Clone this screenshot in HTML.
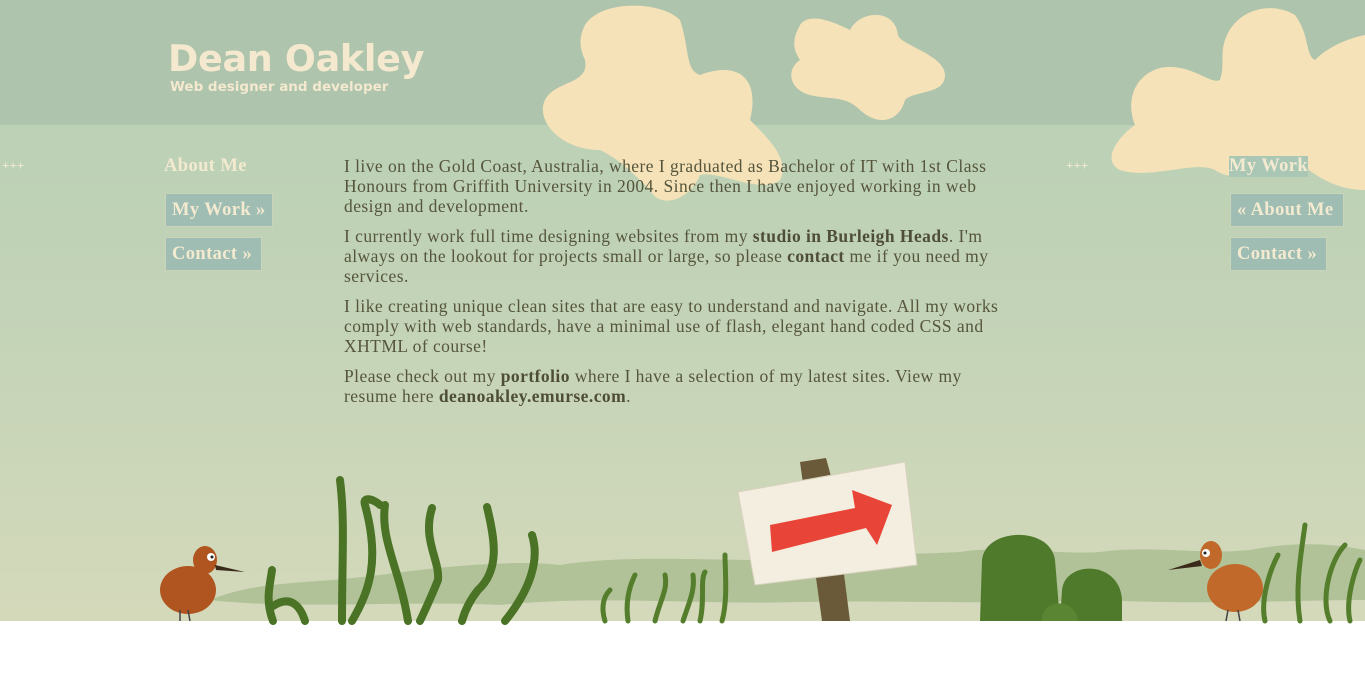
<!DOCTYPE html>
<html><head><meta charset="utf-8"><style>
html,body{margin:0;padding:0;background:#fff;width:1365px;height:679px;overflow:hidden;font-family:"Liberation Serif",serif}
#bg{position:absolute;left:0;top:0}
.t{position:absolute;color:#55553b;font-size:17.5px;letter-spacing:0.45px;line-height:20px;width:664px;left:344px;top:156px}
.t p{margin:0 0 10px}
.t b{color:#4e4e36}
.nav{position:absolute;font-weight:bold;font-size:18.5px;letter-spacing:0.4px;color:#f3ead0}
.btn{position:absolute;background:#9fbdb3;border:1px solid #c9d4b8;color:#f3ead0;font-weight:bold;font-size:18.5px;letter-spacing:0.4px;height:34px;line-height:33px;padding:0 6px;box-sizing:border-box;white-space:nowrap}
.plus{position:absolute;color:#f3ead0;font-size:13px;font-weight:bold;padding:0 2px;height:20px;line-height:20px}
.logo{position:absolute;left:168px;top:37px;color:#f4e9cf;font-family:"DejaVu Sans","Liberation Sans",sans-serif;font-weight:bold}
</style></head><body>
<svg id="bg" width="1365" height="679" viewBox="0 0 1365 679">
<defs><linearGradient id="g" x1="0" y1="0" x2="0" y2="1">
<stop offset="0" stop-color="#b6cfb5"/><stop offset="0.5" stop-color="#c3d3b7"/><stop offset="1" stop-color="#d4d9ba"/></linearGradient></defs>
<rect x="0" y="0" width="1365" height="621" fill="url(#g)"/>
<rect x="0" y="0" width="1365" height="125" fill="#aec4ac"/>
<g fill="#f6e2b9">
<path d="M585 25 C600 0 660 0 680 20 C690 50 685 70 700 75 C740 60 760 80 750 120 C770 140 790 160 780 180 C760 195 720 170 700 175 C690 200 660 210 650 190 C630 170 620 160 600 150 C560 150 535 120 545 100 C555 80 590 85 585 60 C578 45 580 35 585 25Z"/>
<path d="M800 25 C810 10 840 25 850 30 C860 10 895 8 898 35 C900 45 945 55 945 75 C945 95 915 90 905 100 C900 120 880 128 860 110 C845 95 830 100 810 95 C790 90 785 70 800 60 C790 45 795 35 800 25Z"/>
<path d="M1225 40 C1235 10 1270 0 1295 15 C1310 35 1305 55 1315 60 C1335 40 1365 35 1365 35 L1365 190 C1330 190 1310 170 1295 160 C1280 170 1235 185 1215 170 C1195 160 1150 180 1120 170 C1100 160 1120 135 1135 125 C1125 100 1135 75 1160 68 C1190 62 1210 85 1220 80 C1225 65 1220 55 1225 40Z"/>
</g>
<path d="M210 600 C260 580 300 585 380 575 C450 565 520 560 560 565 C620 555 700 560 760 560 C820 555 900 555 960 552 C1000 545 1060 555 1100 552 C1150 545 1200 555 1250 550 C1300 540 1340 545 1365 550 L1365 600 C1300 600 1200 605 1100 600 C1000 605 900 600 800 602 C700 605 600 595 500 605 C400 600 300 610 210 600Z" fill="#b2c298"/>
<rect x="0" y="610" width="1365" height="11" fill="#d4d9ba"/>
<g fill="none" stroke="#4a7326" stroke-width="8" stroke-linecap="round">
<path d="M273 621 C265 600 270 585 272 570"/>
<path d="M273 606 C290 595 300 605 305 621"/>
<path d="M342 621 C342 560 345 520 340 480"/>
<path d="M352 621 C370 590 380 560 365 505 C362 495 375 500 380 505"/>
<path d="M385 505 C380 540 400 570 408 621"/>
<path d="M432 508 C422 540 440 560 438 580 C430 600 425 610 420 621"/>
<path d="M487 507 C495 540 500 570 478 590 C470 600 465 610 462 621"/>
<path d="M532 535 C540 560 530 590 505 621"/>
</g>
<g fill="none" stroke="#547d2c" stroke-width="5" stroke-linecap="round">
<path d="M605 621 C600 605 605 595 610 590"/><path d="M628 621 C625 600 630 585 635 575"/>
<path d="M655 621 C660 600 668 590 665 575"/><path d="M683 621 C690 600 695 590 693 575"/>
<path d="M700 621 C705 600 700 580 705 572"/><path d="M722 621 C728 600 725 570 725 555"/>
<path d="M1265 621 C1260 600 1270 570 1278 555"/><path d="M1300 621 C1295 590 1300 560 1305 525"/>
<path d="M1330 621 C1320 600 1330 560 1345 545"/><path d="M1350 621 C1345 600 1355 570 1360 560"/>
</g>
<ellipse cx="188" cy="590" rx="28" ry="24" fill="#b0551f"/>
<ellipse cx="205" cy="560" rx="12" ry="14" fill="#b0551f"/>
<path d="M215 565 L245 572 L216 570Z" fill="#3a2a1a"/>
<circle cx="211" cy="557" r="4" fill="#fff"/><circle cx="212" cy="557" r="1.5" fill="#222"/>
<path d="M180 610 L180 621 M188 610 L190 621" stroke="#444" stroke-width="1.5"/>
<path d="M800 462 L826 458 L832 480 L850 621 L822 621Z" fill="#6a5a3a"/>
<path d="M738 492 L905 462 L917 565 L755 585Z" fill="#f3eedf" stroke="#d8d2bf"/>
<path d="M770 525 L855 508 L852 490 L892 505 L877 545 L866 528 L772 552Z" fill="#e94438"/>
<path d="M980 621 L982 560 C985 528 1050 525 1055 560 L1060 621Z" fill="#4f7a2c"/>
<path d="M1060 621 L1062 590 C1065 560 1120 560 1122 600 L1122 621Z" fill="#4f7a2c"/>
<path d="M1042 621 C1040 600 1075 595 1078 621Z" fill="#5a8533"/>
<ellipse cx="1235" cy="588" rx="28" ry="24" fill="#c0692a"/>
<ellipse cx="1211" cy="555" rx="11" ry="14" fill="#c0692a"/>
<path d="M1200 560 L1168 570 L1202 566Z" fill="#3a2a1a"/>
<circle cx="1206" cy="553" r="4" fill="#fff"/><circle cx="1205" cy="553" r="1.5" fill="#222"/>
<path d="M1228 610 L1226 621 M1238 610 L1240 621" stroke="#444" stroke-width="1.5"/>
</svg>

<div class="logo"><div style="font-size:36.5px;line-height:44px;letter-spacing:-0.3px">Dean Oakley</div><div style="font-size:13.5px;line-height:14px;margin-left:2px;margin-top:-1px">Web designer and developer</div></div>

<div class="plus" style="left:0;top:156px">+++</div>
<div class="nav" style="left:164px;top:156px">About Me</div>
<div class="btn" style="left:165px;top:193px;width:108px">My Work »</div>
<div class="btn" style="left:165px;top:237px;width:97px">Contact »</div>

<div class="plus" style="left:1064px;top:156px">+++</div>
<div class="nav" style="left:1229px;top:156px;background:#aac7b5">My Work</div>
<div class="btn" style="left:1230px;top:193px;width:114px">« About Me</div>
<div class="btn" style="left:1230px;top:237px;width:97px">Contact »</div>

<div class="t">
<p>I live on the Gold Coast, Australia, where I graduated as Bachelor of IT with 1st Class Honours from Griffith University in 2004. Since then I have enjoyed working in web design and development.</p>
<p>I currently work full time designing websites from my <b>studio in Burleigh Heads</b>. I'm always on the lookout for projects small or large, so please <b>contact</b> me if you need my services.</p>
<p>I like creating unique clean sites that are easy to understand and navigate. All my works comply with web standards, have a minimal use of flash, elegant hand coded CSS and XHTML of course!</p>
<p>Please check out my <b>portfolio</b> where I have a selection of my latest sites. View my resume here <b>deanoakley.emurse.com</b>.</p>
</div>
</body></html>
